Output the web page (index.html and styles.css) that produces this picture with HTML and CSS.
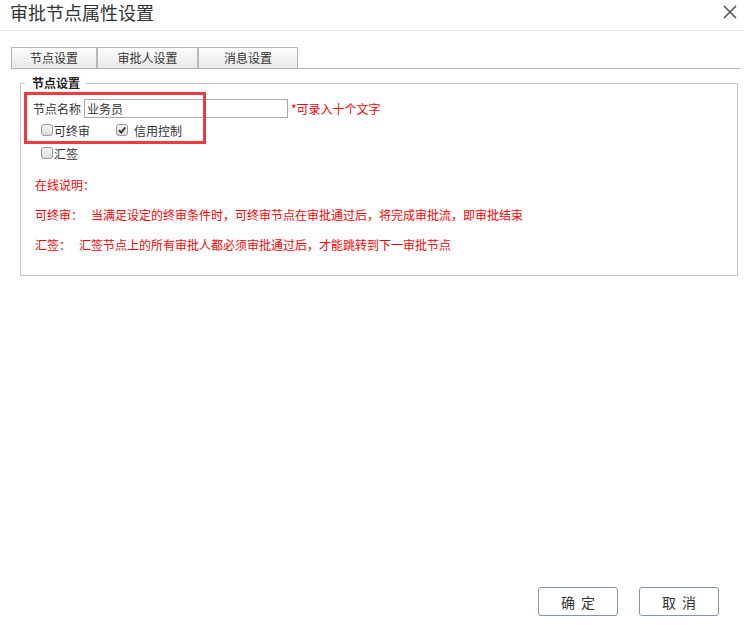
FILE: index.html
```html
<!DOCTYPE html>
<html lang="zh-CN">
<head>
<meta charset="utf-8">
<title>审批节点属性设置</title>
<link rel="stylesheet" href="styles.css">
</head>
<body>
<div class="dialog">
  <header class="hd">
    <h1 class="title">审批节点属性设置</h1>
    <span class="close"><svg width="14" height="14" viewBox="0 0 14 14"><path d="M1 1L13 13M13 1L1 13" stroke="#555" stroke-width="1.6" fill="none"/></svg></span>
  </header>
  <main class="bd">
    <ul class="tabs">
      <li class="tab t1">节点设置</li>
      <li class="tab t2">审批人设置</li>
      <li class="tab t3">消息设置</li>
    </ul>
    <fieldset class="fs">
      <legend class="lg">节点设置</legend>
      <div class="row name-row">
        <label class="lbl">节点名称</label>
        <input class="name-input" type="text" value="业务员">
        <span class="note">*可录入十个文字</span>
      </div>
      <div class="row chk-row r2">
        <span class="chk"><span class="box"></span>可终审</span>
        <span class="chk chk2"><span class="box"><svg width="10" height="10" viewBox="0 0 10 10"><path d="M2 5.2L4.2 7.6L8.3 2.4" stroke="#333" stroke-width="1.8" fill="none"/></svg></span>信用控制</span>
      </div>
      <div class="row chk-row r3">
        <span class="chk"><span class="box"></span>汇签</span>
      </div>
      <p class="desc d1">在线说明：</p>
      <p class="desc">可终审：&nbsp;&nbsp;&nbsp;当满足设定的终审条件时，可终审节点在审批通过后，将完成审批流，即审批结束</p>
      <p class="desc">汇签：&nbsp;&nbsp;&nbsp;汇签节点上的所有审批人都必须审批通过后，才能跳转到下一审批节点</p>
    </fieldset>
  </main>
  <footer class="ft">
    <button class="btn">确定</button>
    <button class="btn">取消</button>
  </footer>
  <div class="annot"></div>
</div>
</body>
</html>
```
FILE: styles.css
```css
html, body {
  margin: 0;
  padding: 0;
  background: #fff;
}
body {
  font-family: "Noto Sans CJK SC", "Liberation Sans", sans-serif;
  font-size: 12px;
  color: #333;
}
.dialog {
  position: relative;
  width: 744px;
  height: 625px;
  display: flex;
  flex-direction: column;
}
.hd {
  height: 30px;
  border-bottom: 1px solid #e6e6e6;
  display: flex;
  justify-content: space-between;
  align-items: flex-start;
  padding-left: 10px;
}
.title {
  margin: 0;
  font-size: 18px;
  font-weight: normal;
  line-height: 25px;
  color: #333;
}
.close {
  margin-top: 5px;
  margin-right: 7px;
  width: 14px;
  height: 14px;
}
.close svg { display: block; }
.bd {
  flex: 1;
}
.tabs {
  list-style: none;
  margin: 16px 4px 0 11px;
  padding: 0;
  display: flex;
  border-bottom: 1px solid #b4b4b4;
}
.tab {
  box-sizing: border-box;
  height: 21px;
  border: 1px solid #b8b8b8;
  border-bottom: none;
  background: linear-gradient(#fcfcfc, #e9e9e9);
  text-align: center;
  line-height: 20px;
  font-size: 12px;
  color: #333;
}
.t1 { width: 86px; }
.t2 { width: 101px; }
.t3 { width: 100px; }
.fs {
  margin: 6px 6px 0 20px;
  padding: 8px 4px 22px 4px;
  border: 1px solid #c6c6c6;
  min-width: 0;
}
.lg {
  padding: 0 6px 0 7px;
  font-weight: bold;
  font-size: 12px;
  line-height: 16px;
  color: #222;
}
.row {
  display: flex;
  align-items: center;
  margin-left: 8px;
}
.name-row {
  height: 19px;
}
.lbl {
  color: #333;
  margin-right: 3px;
}
.name-input {
  box-sizing: border-box;
  width: 204px;
  height: 19px;
  border: 1px solid #a9a9a9;
  padding: 0 2px;
  margin: 0;
  font-family: inherit;
  font-size: 12px;
  color: #333;
  outline: none;
}
.note {
  margin-left: 3px;
  color: #f00;
}
.chk-row {
  height: 14px;
  padding-left: 8px;
}
.r2 { margin-top: 5px; }
.r3 { margin-top: 9px; }
.chk {
  display: flex;
  align-items: center;
  color: #333;
}
.chk2 {
  margin-left: 26px;
}
.box {
  box-sizing: border-box;
  width: 12px;
  height: 12px;
  border: 1px solid #9a9a9a;
  border-radius: 3px;
  background: linear-gradient(#f6f6f6, #dcdcdc);
  margin-right: 1px;
  display: flex;
  align-items: center;
  justify-content: center;
}
.chk2 .box { margin-right: 6px; }
.box svg { display: block; }
.desc {
  margin: 14px 0 0 10px;
  line-height: 16px;
  color: #f00;
}
.desc.d1 { margin-top: 17px; }
.ft {
  display: flex;
  justify-content: flex-end;
  gap: 21px;
  padding: 0 25px 9px 0;
}
.btn {
  box-sizing: border-box;
  width: 80px;
  height: 29px;
  border: 1px solid #8594a6;
  border-radius: 3px;
  background: #fff;
  font-family: inherit;
  font-size: 14px;
  letter-spacing: 6px;
  text-indent: 6px;
  color: #333;
  padding: 0;
}
.annot {
  position: absolute;
  left: 24px;
  top: 92px;
  width: 182px;
  height: 52px;
  box-sizing: border-box;
  border: 3px solid #f2393c;
  pointer-events: none;
}
```
